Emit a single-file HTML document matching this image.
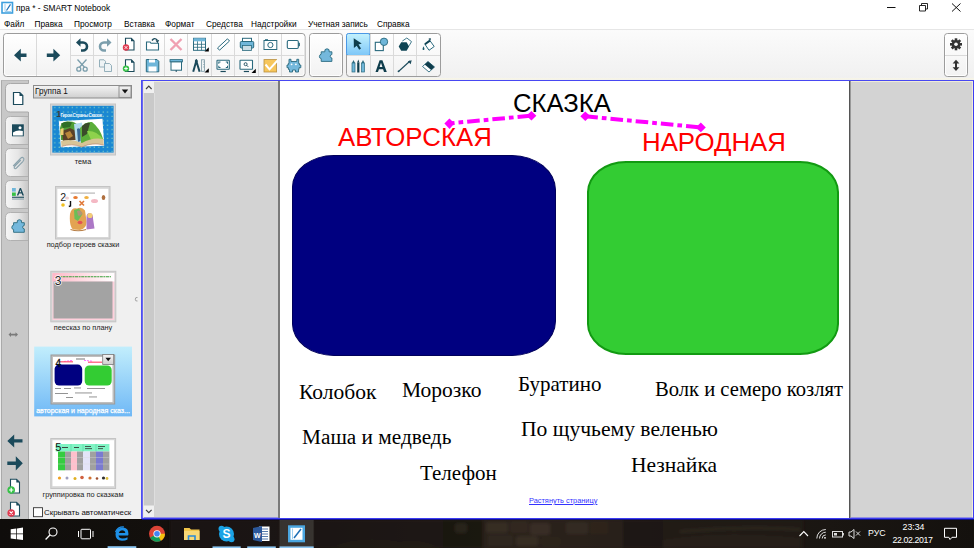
<!DOCTYPE html>
<html><head><meta charset="utf-8">
<style>
*{margin:0;padding:0;box-sizing:border-box}
html,body{width:974px;height:548px;overflow:hidden;background:#fff;font-family:"Liberation Sans",sans-serif}
.a{position:absolute}
#title{left:0;top:0;width:974px;height:16px;background:#fff}
#menu{left:0;top:16px;width:974px;height:14px;background:#fff;font-size:8.3px;color:#000}
#menu span{position:absolute;top:2.5px;line-height:10px}
#tb{left:0;top:29px;width:974px;height:51px;background:linear-gradient(#fbfbfb,#f0f0f0);border-top:1.5px solid #e6e6e6}
.grp{position:absolute;border:1px solid #acacac;border-radius:3px;background:linear-gradient(#fefefe,#f4f4f4)}
.vd{position:absolute;width:1px;background:#dcdcdc}
.hd{position:absolute;height:1px;background:#dcdcdc}
.ic{position:absolute}
#tabs{left:0;top:80px;width:28px;height:439px;background:#c9c9c9;border-left:1px solid #b0b0b0}
.tab{position:absolute;left:5px;width:23px;height:28px;border-radius:5px 0 0 5px;background:linear-gradient(90deg,#f2f2f2,#e0e0e0 60%,#c8c8c8);border:1px solid #b9b9b9;border-right:none}
#sorter{left:28px;top:80px;width:114px;height:439px;background:#f0f0f0}
.thumb{position:absolute;border:2px solid #c9c9c9;box-shadow:0 0 1px #bbb}
.lbl{position:absolute;font-size:8px;color:#222;text-align:center;white-space:nowrap}
#frame{left:142px;top:80px;width:832px;height:439px;border:1px solid #3a3af0}
#ws{left:143px;top:81px;width:830px;height:437px;background:#d3d3d3}
#page{left:278px;top:81px;width:573px;height:437px;background:#fff;border-left:2px solid #7a7a7a;border-right:1px solid #999;box-shadow:inset -1px 0 0 #555}
#taskbar{left:0;top:519px;width:974px;height:29px;background:linear-gradient(90deg,#0f0d0b 0%,#16120e 30%,#231c14 45%,#2a2118 55%,#1e1812 70%,#1a1612 85%,#14110e 100%)}
.serif{font-family:"Liberation Serif",serif;color:#000;white-space:nowrap;position:absolute;font-size:20px;line-height:1}
</style></head><body>
<div id="title" class="a"></div>
<svg class="a" style="left:0;top:0" width="974" height="16">
<rect x="2" y="2.5" width="10.5" height="10.5" fill="#fff" stroke="#3fa0de" stroke-width="1.6"/>
<path d="M5 4 V11.5 H11" fill="none" stroke="#9fd0f0" stroke-width="1"/>
<path d="M6.5 10.5 L10.5 4.3" stroke="#1d6fb5" stroke-width="1.2"/>
<path d="M887 7.5 H895.5" stroke="#111" stroke-width="1"/>
<path d="M919.5 5.5 H925.5 V11 H919.5 Z M921.5 5.5 V3.5 H927.5 V9 H925.5" fill="none" stroke="#111" stroke-width="0.9"/>
<path d="M952 3.5 L960.5 11.5 M960.5 3.5 L952 11.5" stroke="#111" stroke-width="1"/>
</svg>
<div class="a" style="left:16px;top:3px;font-size:8.4px;line-height:11px;color:#000;white-space:nowrap">пра * - SMART Notebook</div>
<div id="menu" class="a">
<span style="left:4px">Файл</span><span style="left:34.5px">Правка</span><span style="left:74px">Просмотр</span><span style="left:124px">Вставка</span><span style="left:165px">Формат</span><span style="left:206px">Средства</span><span style="left:251px">Надстройки</span><span style="left:308px">Учетная запись</span><span style="left:377px">Справка</span>
</div>
<div id="tb" class="a"></div>
<svg class="a" style="left:0;top:0" width="974" height="80" viewBox="0 0 974 80">
<defs>
<linearGradient id="gb" x1="0" y1="0" x2="0" y2="1"><stop offset="0" stop-color="#ffffff"/><stop offset="1" stop-color="#f2f2f2"/></linearGradient>
<linearGradient id="sel" x1="0" y1="0" x2="0" y2="1"><stop offset="0" stop-color="#c4f2fd"/><stop offset="1" stop-color="#7cc6f8"/></linearGradient>
</defs>
<!-- groups -->
<g fill="url(#gb)" stroke="#9c9c9c" stroke-width="1">
<rect x="3.5" y="33.5" width="301.5" height="43" rx="3"/>
<rect x="309.5" y="33.5" width="33" height="43" rx="3"/>
<rect x="346.5" y="33.5" width="94" height="43" rx="3"/>
<rect x="944.5" y="33.5" width="23" height="43" rx="3"/>
</g>
<g fill="none" stroke="#ffffff" stroke-width="1" opacity="0.9">
<rect x="4.5" y="34.5" width="299.5" height="41" rx="2.5"/>
<rect x="310.5" y="34.5" width="31" height="41" rx="2.5"/>
<rect x="945.5" y="34.5" width="21" height="41" rx="2.5"/>
</g>
<rect x="346.5" y="33.5" width="23.5" height="22" rx="2" fill="url(#sel)" stroke="#4a98e6"/>
<path d="M142 78.8 H974" stroke="#f8f6e4" stroke-width="1.2"/>
<g stroke="#dadada" stroke-width="1">
<path d="M36.5 34V76M70.5 34V76M93.5 34V76M117.5 34V76M140.5 34V76M164.5 34V76M187.5 34V76M211.5 34V76M234.5 34V76M258.5 34V76M281.5 34V76"/>
<path d="M71 55.5H304.5"/>
<path d="M370.5 34V76M393.5 34V76M416.5 34V76M347 55.5H370M370 55.5H440"/>
<path d="M945 55.5H967"/>
</g>
<g fill="#1b4a5b" stroke="none">
<!-- left arrow -->
<path d="M14 55.2 L20.8 48.8 V53.5 H26.5 V56.9 H20.8 V61.6 Z"/>
<!-- right arrow -->
<path d="M60.2 55.2 L53.4 48.8 V53.5 H46.8 V56.9 H53.4 V61.6 Z"/>
</g>
<!-- undo -->
<g fill="none" stroke="#1b4a5b" stroke-width="2.6" stroke-linecap="butt">
<path d="M79 42.5 H83 A4 4 0 0 1 83 50.5 H81"/>
</g>
<path d="M76 42.5 L80.5 38.3 V46.7 Z" fill="#1b4a5b"/>
<!-- redo -->
<g fill="none" stroke="#7b9eac" stroke-width="2.6">
<path d="M108 42.5 H104 A4 4 0 0 0 104 50.5 H106"/>
</g>
<path d="M111.5 42.5 L107 38.3 V46.7 Z" fill="#7b9eac"/>
<!-- delete page -->
<path d="M125.5 38.2 H131.3 L134 40.9 V50 H125.5 Z" fill="#fff" stroke="#1b4a5b" stroke-width="1.1"/>
<path d="M131 38 L134.3 41.2 H131 Z" fill="#1b4a5b"/>
<circle cx="126" cy="47.5" r="3.2" fill="#e03a50"/>
<path d="M124.6 46.1 L127.4 48.9 M127.4 46.1 L124.6 48.9" stroke="#fff" stroke-width="0.9"/>
<!-- cut -->
<g fill="none" stroke="#7b9eac" stroke-width="1.3">
<path d="M77.5 59.5 L84.5 67.3 M86.5 59.5 L79.5 67.3"/>
<circle cx="78.8" cy="69.2" r="2"/><circle cx="85.2" cy="69.2" r="2"/>
</g>
<!-- copy -->
<g fill="#eef3f5" stroke="#8aa8b4" stroke-width="0.9">
<path d="M99.5 59.8 H104 L105.5 61.3 V67 H99.5 Z"/>
<path d="M104.5 63.5 H109.5 L111.5 65.5 V71.5 H104.5 Z"/>
</g>
<!-- add page -->
<path d="M125.5 59.8 H131.3 L134 62.5 V71.5 H125.5 Z" fill="#fff" stroke="#1b4a5b" stroke-width="1.1"/>
<path d="M131 59.6 L134.3 62.8 H131 Z" fill="#1b4a5b"/>
<circle cx="126" cy="68.6" r="3.2" fill="#35c046"/>
<path d="M124.2 68.6 H127.8 M126 66.8 V70.4" stroke="#fff" stroke-width="1"/>
<!-- open folder -->
<path d="M146.5 42 H150 L151 43.3 H158.5 V50 H146.5 Z" fill="#fff" stroke="#2a6a7e" stroke-width="1.1"/>
<path d="M152 40.5 Q154.5 37 157.3 40.2" fill="none" stroke="#1b4a5b" stroke-width="1.4"/>
<path d="M155.5 40.5 L159.2 40 L157.6 43.3 Z" fill="#1b4a5b"/>
<!-- pink X -->
<path d="M170.5 39 L181.5 50 M181.5 39 L170.5 50" stroke="#f0a0b2" stroke-width="2.4"/>
<!-- table -->
<rect x="193.5" y="38.3" width="12" height="12" fill="#fff" stroke="#2a6a7e" stroke-width="1"/>
<rect x="193.5" y="38.3" width="12" height="3" fill="#6fb6d9"/>
<path d="M193.5 44.3 H205.5 M193.5 47.3 H205.5 M197.5 41.3 V50.3 M201.5 41.3 V50.3" stroke="#2a6a7e" stroke-width="0.8"/>
<path d="M208.8 47.3 V51.6 H204.5 Z" fill="#000"/>
<!-- save -->
<path d="M146.3 59.5 H157 L158.8 61.3 V71.8 H146.3 Z" fill="#6fb6d9" stroke="#2a6a7e" stroke-width="1"/>
<rect x="149" y="59.5" width="6" height="3" fill="#fff"/>
<rect x="148.5" y="66.5" width="8" height="5" fill="#fff"/>
<!-- screen -->
<rect x="170" y="59.6" width="12.5" height="2.3" fill="#6fb6d9" stroke="#2a6a7e" stroke-width="0.8"/>
<rect x="171" y="61.9" width="10.5" height="8.3" fill="#fff" stroke="#2a6a7e" stroke-width="1"/>
<path d="M176.2 70.2 V72" stroke="#1b4a5b" stroke-width="1"/>
<!-- compass -->
<path d="M196.3 61 L193.2 71.8 M196.3 61 L199.6 71.8" stroke="#1b4a5b" stroke-width="2" fill="none"/>
<circle cx="196.3" cy="61" r="1.5" fill="#1b4a5b"/><path d="M196.3 59 V60" stroke="#1b4a5b" stroke-width="1"/>
<rect x="201.5" y="59.8" width="3" height="11.5" fill="#eef3f5" stroke="#7a98a4" stroke-width="0.8"/>
<path d="M203 62 H204.5 M203 64.5 H204.5 M203 67 H204.5" stroke="#7a98a4" stroke-width="0.6"/>
<path d="M208.8 68.3 V72.6 H204.5 Z" fill="#000"/>
<!-- ruler -->
<path d="M217.5 48 L227.5 38.8 L229.5 41 L219.5 50.2 Z" fill="#fff" stroke="#2a6a7e" stroke-width="1"/>
<!-- printer -->
<rect x="242.5" y="38.3" width="9" height="3.5" fill="#fff" stroke="#2a6a7e" stroke-width="1"/>
<rect x="240.3" y="41.5" width="13.4" height="6.5" rx="1" fill="#6fb6d9" stroke="#2a6a7e" stroke-width="1"/>
<rect x="242.5" y="45.5" width="9" height="5" fill="#c9dde5" stroke="#2a6a7e" stroke-width="0.8"/>
<!-- camera -->
<rect x="264" y="40.5" width="12.8" height="9" fill="#fff" stroke="#2a6a7e" stroke-width="1"/>
<rect x="265" y="39.2" width="3" height="1.5" fill="#2a6a7e"/>
<circle cx="270.4" cy="45" r="2.6" fill="none" stroke="#2a6a7e" stroke-width="1"/>
<!-- battery rect -->
<rect x="287.3" y="40.5" width="11" height="8" rx="1.2" fill="#fff" stroke="#2a6a7e" stroke-width="1.1"/>
<rect x="298.3" y="42.8" width="1.6" height="3.4" fill="#2a6a7e"/>
<!-- capture monitor -->
<rect x="217" y="60.3" width="12.3" height="9" rx="0.5" fill="#fff" stroke="#2a6a7e" stroke-width="1.1"/>
<path d="M218.3 61.6 h2.2 v1 h-1.2 v1.2 h-1z M228 61.6 h-2.2 v1 h1.2 v1.2 h1z M218.3 68 h2.2 v-1 h-1.2 v-1.2 h-1z M228 68 h-2.2 v-1 h1.2 v-1.2 h1z" fill="#2a6a7e"/>
<path d="M220.5 71.5 H225.8" stroke="#1b4a5b" stroke-width="1.2"/>
<!-- doc cam monitor -->
<rect x="240" y="60.3" width="12.5" height="9" rx="0.5" fill="#fff" stroke="#2a6a7e" stroke-width="1.1"/>
<circle cx="245.6" cy="64.2" r="1.5" fill="none" stroke="#1b4a5b" stroke-width="0.9"/>
<path d="M246.7 65.3 L248.2 66.8" stroke="#1b4a5b" stroke-width="1"/>
<path d="M243.8 71.5 H249" stroke="#1b4a5b" stroke-width="1.2"/>
<path d="M255.8 68.8 V73.1 H251.5 Z" fill="#000"/>
<!-- yellow check -->
<rect x="264" y="59.6" width="12.6" height="12.4" fill="#f7c65a" stroke="#b89040" stroke-width="0.8"/>
<path d="M265.5 64.5 L269.5 69.3 L277.5 60.5" fill="none" stroke="#fff" stroke-width="2"/>
<!-- creature -->
<path d="M289 59.3 H291 V61.5 H296.8 V59.3 H298.7 V63.5 H299.5 V65 H300.8 V67.7 H299 V69.5 H298.5 V72 H295.5 V70 H292.5 V72 H289.5 V69.5 H288.5 V67.7 H287 V65 H288.3 V63.5 H289 Z" fill="#74b8dc" stroke="#2a6a7e" stroke-width="0.9" stroke-linejoin="round"/>
<circle cx="291.6" cy="64.3" r="0.9" fill="#fff"/><circle cx="295.9" cy="64.3" r="0.9" fill="#fff"/>
<!-- puzzle -->
<path d="M321.2 61.4 V58.6 Q319.2 58.3 319.4 56.4 Q319.7 54.3 321.2 54.2 V51.8 H324.8 Q324.2 48.8 327 48.8 Q329.8 48.8 329.2 51.8 H331.9 V54.5 Q330.2 54.8 330.2 56.3 Q330.2 57.8 331.9 58 V61.4 Z" fill="#74b8dc" stroke="#2a6a7e" stroke-width="0.9" stroke-linejoin="round"/>
<!-- select arrow -->
<path d="M353.7 38.3 L361.7 43.5 L358.5 44.5 L361 48.5 L359.2 49.7 L356.7 45.7 L353.9 47.9 Z" fill="#0f3d4c"/>
<!-- shapes -->
<rect x="375.3" y="42.3" width="8" height="8.3" fill="#fff" stroke="#2a6a7e" stroke-width="1.1"/>
<circle cx="384" cy="41.8" r="3.7" fill="#6fb6d9" stroke="#2a6a7e" stroke-width="0.9"/>
<!-- polygon (eraser hexagon) -->
<path d="M402.3 41.1 L406.8 38 L411.5 41.6 L409.1 45.8" fill="#fff" stroke="#2a6a7e" stroke-width="0.9"/>
<path d="M398.7 46.5 L401.2 42.2 H406.6 L409.1 46.5 L406.6 50.8 H401.2 Z" fill="#0f4454"/>
<!-- fill bucket -->
<path d="M424.9 44.2 L429.9 40.6 L434.2 46.5 L429 50.3 Z" fill="#fff" stroke="#2a6a7e" stroke-width="1"/>
<path d="M424.9 44.2 L429.9 40.6" stroke="#0f4454" stroke-width="2"/>
<path d="M429.9 40.8 V38.3 M428.7 39 H431" stroke="#1b4a5b" stroke-width="1.1"/>
<path d="M423.5 46.3 Q422.2 48.6 422.6 49.4 Q423.5 50.6 424.4 49.4 Q424.8 48.6 423.5 46.3Z" fill="#1b5a6b"/>
<!-- pens -->
<rect x="352" y="63" width="3" height="9" fill="#6fb6d9" stroke="#2a6a7e" stroke-width="0.7"/>
<path d="M352 63 L353.5 60 L355 63Z" fill="#2a6a7e"/>
<rect x="357.2" y="62.5" width="2.2" height="10" fill="#0f3d4c"/>
<path d="M357.2 62.5 L358.3 59.6 L359.4 62.5Z" fill="#0f3d4c"/>
<rect x="361.5" y="63" width="3" height="9" fill="#6fb6d9" stroke="#2a6a7e" stroke-width="0.7"/>
<path d="M361.5 63 L363 60 L364.5 63Z" fill="#2a6a7e"/>
<!-- text A -->
<path d="M375.5 72 L379.6 60.3 H382.4 L386.8 72 H384 L383.1 69.2 H378.9 L378 72 Z M379.6 67 H382.4 L381 62.8 Z" fill="#0f3d4c"/>
<!-- line -->
<path d="M398.5 71.5 L410 61" stroke="#1b4a5b" stroke-width="1.1"/>
<circle cx="398.5" cy="71.3" r="0.9" fill="#1b4a5b"/>
<path d="M411.7 60.3 L407.8 61.3 L410.7 64.2 Z" fill="#1b4a5b"/>
<!-- eraser -->
<path d="M428 61.5 L434.5 67 L429 72 L422.5 66.5 Z" fill="#fff" stroke="#2a6a7e" stroke-width="0.9"/>
<path d="M428 61.5 L434.5 67 L431.2 70 L424.7 64.5 Z" fill="#0f3d4c"/>
<!-- gear -->
<g transform="translate(956,44.3)" fill="#333">
<circle r="4.3"/>
<path d="M-1.3 -6 H1.3 V6 H-1.3Z" /><path d="M-1.3 -6 H1.3 V6 H-1.3Z" transform="rotate(45)"/><path d="M-1.3 -6 H1.3 V6 H-1.3Z" transform="rotate(90)"/><path d="M-1.3 -6 H1.3 V6 H-1.3Z" transform="rotate(135)"/>
<circle r="1.8" fill="#f8f8f8"/>
</g>
<!-- up-down arrows -->
<path d="M956 59.8 L959.4 63.5 H957 V67.2 H959.4 L956 70.9 L952.6 67.2 H955 V63.5 H952.6 Z" fill="#333"/>
</svg>
<svg class="a" style="left:0;top:80px" width="142" height="439" viewBox="0 80 142 439">
<defs>
<linearGradient id="tabg" x1="0" y1="0" x2="1" y2="0"><stop offset="0" stop-color="#f6f6f6"/><stop offset="0.55" stop-color="#e6e6e6"/><stop offset="1" stop-color="#c6c6c6"/></linearGradient>
<linearGradient id="combo" x1="0" y1="0" x2="0" y2="1"><stop offset="0" stop-color="#f4f4f4"/><stop offset="1" stop-color="#cfcfcf"/></linearGradient>
<linearGradient id="selb" x1="0" y1="0" x2="0" y2="1"><stop offset="0" stop-color="#c2eefc"/><stop offset="1" stop-color="#6fb8f6"/></linearGradient>
<pattern id="dots" x="0" y="0" width="4.4" height="4.4" patternUnits="userSpaceOnUse"><circle cx="2" cy="2" r="0.7" fill="#8cd4c0"/></pattern>
</defs>
<rect x="0" y="80" width="28.5" height="439" fill="#c8c8c8"/>
<rect x="0" y="80" width="1" height="439" fill="#ececec"/><rect x="1" y="80" width="1" height="439" fill="#aaaaaa"/>
<rect x="28.5" y="80" width="113.5" height="439" fill="#f0f0f0"/>
<path d="M1.5 80.5 H28.5" stroke="#b8b8b8"/>
<!-- active tab -->
<path d="M28.5 83.5 H10.5 Q5.5 83.5 5.5 88.5 V107 Q5.5 112 10.5 112 H28.5" fill="#f0f0f0" stroke="#a9a9a9" stroke-width="1"/>
<rect x="28" y="84" width="1.5" height="27.5" fill="#f0f0f0"/>
<!-- inactive tabs -->
<g fill="url(#tabg)" stroke="#b0b0b0" stroke-width="1">
<path d="M28.5 116.5 H10.5 Q5.5 116.5 5.5 121.5 V139.5 Q5.5 144.5 10.5 144.5 H28.5"/>
<path d="M28.5 148.5 H10.5 Q5.5 148.5 5.5 153.5 V171.5 Q5.5 176.5 10.5 176.5 H28.5"/>
<path d="M28.5 180.5 H10.5 Q5.5 180.5 5.5 185.5 V203.5 Q5.5 208.5 10.5 208.5 H28.5"/>
<path d="M28.5 212.5 H10.5 Q5.5 212.5 5.5 217.5 V235.5 Q5.5 240.5 10.5 240.5 H28.5"/>
</g>
<path d="M28.5 80 V83.5 M28.5 112 V519" stroke="#a9a9a9" stroke-width="1"/>
<!-- page icon -->
<path d="M13.5 92.5 H19.8 L22.8 95.5 V104.5 H13.5 Z" fill="#fff" stroke="#1b4a5b" stroke-width="1.2"/>
<path d="M19.5 92.2 L23.2 95.9 H19.5Z" fill="#1b4a5b"/>
<!-- gallery icon -->
<rect x="12" y="124.3" width="11.8" height="12" fill="#1b4a5b"/>
<path d="M13 132.5 Q17 129.5 22.8 131 V135.5 H13 Z" fill="#fff"/>
<circle cx="20" cy="127.8" r="1.5" fill="#fff"/>
<!-- paperclip -->
<path d="M13.2 166 L20.5 158.3 Q22.6 156.4 23.8 158.5 Q24.3 160 22.8 161.6 L16.5 168 Q15 169.3 14.3 168.3 Q13.8 167.2 15 166 L20.8 160" fill="none" stroke="#8aa2ac" stroke-width="1.1"/>
<!-- properties -->
<rect x="12" y="188" width="3.8" height="3.6" fill="#6fb6d9"/>
<rect x="12" y="192.5" width="3.8" height="3.4" fill="#35c046"/>
<path d="M16.8 195.5 L19.8 188 H21 L24 195.5 H22.4 L21.7 193.6 H19.1 L18.4 195.5 Z M19.6 192.3 H21.2 L20.4 190 Z" fill="#1b4a5b"/>
<rect x="12" y="196.7" width="12" height="1.1" fill="#1b4a5b"/><rect x="12" y="198.5" width="12" height="1.1" fill="#8aa2ac"/>
<!-- puzzle tab -->
<path transform="translate(-307.6,170.9)" d="M321.2 61.4 V58.6 Q319.2 58.3 319.4 56.4 Q319.7 54.3 321.2 54.2 V51.8 H324.8 Q324.2 48.8 327 48.8 Q329.8 48.8 329.2 51.8 H331.9 V54.5 Q330.2 54.8 330.2 56.3 Q330.2 57.8 331.9 58 V61.4 Z" fill="#74b8dc" stroke="#2a6a7e" stroke-width="0.9" stroke-linejoin="round"/>
<!-- resize arrows -->
<path d="M8.5 334.6 L11 332.3 V333.8 H15.5 V332.3 L18 334.6 L15.5 336.9 V335.4 H11 V336.9 Z" fill="#7a7a7a"/>
<!-- prev/next arrows -->
<path d="M7.3 441 L14.2 434.5 V439.2 H22.5 V442.6 H14.2 V447.5 Z" fill="#1b4a5b"/>
<path d="M22.8 463.3 L15.8 456.3 V461.6 H7.3 V465 H15.8 V470.4 Z" fill="#1b4a5b"/>
<!-- add page -->
<path d="M10.5 479.3 H16.5 L19.5 482.3 V493 H10.5 Z" fill="#fff" stroke="#1b4a5b" stroke-width="1.1"/>
<path d="M16.3 479 L19.8 482.5 H16.3Z" fill="#1b4a5b"/>
<circle cx="11.2" cy="490" r="3.8" fill="#35c046"/>
<path d="M9 490 H13.4 M11.2 487.8 V492.2" stroke="#fff" stroke-width="1.2"/>
<!-- delete page -->
<path d="M10.5 502.3 H16.5 L19.5 505.3 V516 H10.5 Z" fill="#fff" stroke="#1b4a5b" stroke-width="1.1"/>
<path d="M16.3 502 L19.8 505.5 H16.3Z" fill="#1b4a5b"/>
<circle cx="11.2" cy="513" r="3.8" fill="#e03a50"/>
<path d="M9.6 511.4 L12.8 514.6 M12.8 511.4 L9.6 514.6" stroke="#fff" stroke-width="1.1"/>

<!-- combo -->
<rect x="33.5" y="85.5" width="98" height="12.5" fill="url(#combo)" stroke="#8c8c8c" stroke-width="1"/>
<rect x="119" y="86" width="12" height="11.5" fill="url(#combo)" stroke="#8a8a8a" stroke-width="0.9"/>
<path d="M121.8 89.5 H128.2 L125 93.5 Z" fill="#111"/>

<!-- thumb 1 -->
<rect x="50.5" y="104" width="65" height="51" fill="#d6d6d6" stroke="#c4c4c4"/>
<rect x="52.3" y="105.8" width="61.3" height="46.8" fill="#1a88d2"/>
<rect x="52.3" y="105.8" width="61.3" height="46.8" fill="url(#dots)"/>
<text x="56.3" y="117.4" font-size="9.5" font-weight="bold" fill="#3a3a3a">1</text>
<text x="60.5" y="117.2" font-size="4.6" font-weight="bold" fill="#e8f6fc" textLength="41.5">Герои Страны Сказок</text>
<path d="M58.8 121.2 L102.5 118.8 L104.2 145.7 L60.8 147.3 Z" fill="#fff"/>
<path d="M60 128 Q61 121 68 121.5 Q76 121 78 126 L79 136 L70 141 L61 140 Z" fill="#4f9e34"/>
<path d="M61 123.5 Q66 120.5 72 122.5 L70 127 L63 128Z" fill="#2f6e26"/>
<path d="M62 131 L70 128 L76 131 L76 140 L63 141 Z" fill="#5a4028"/>
<path d="M65 133 L70 131 L73 136 L68 139Z" fill="#b8863a"/>
<path d="M60.5 129 L63.5 128 L63.5 135 L60.5 135Z" fill="#f0d070"/>
<path d="M74 124 L82 122.5 L84 144 L76 145 Z" fill="#b4dcee"/>
<path d="M77 129 Q79 127 81 130 L80.5 141 L78 142Z" fill="#3a6a9a"/>
<path d="M80 128 Q86 121 92 122 Q100 128 103.5 140 L90 143 L81 143 Z" fill="#5cae3a"/>
<path d="M82 126 Q86 122 90 123 L87 134 L82 137Z" fill="#3a4a2a"/>
<path d="M87 131 Q96 130 103 139 L92 142Z" fill="#8ed24c"/>
<path d="M61 141 Q71 138 82 143 Q92 137 103.5 139 L103.8 145 Q92 142 82 147 Q72 143 61.5 146.5 Z" fill="#d8c496"/>
<path d="M61.5 146.5 Q72 143 82 147 Q92 142 103.8 145" stroke="#b07a6a" stroke-width="0.6" fill="none"/>
<!-- thumb 2 -->
<rect x="55.5" y="186.5" width="54.5" height="52.5" fill="#d6d6d6" stroke="#c4c4c4"/>
<rect x="57.3" y="188.8" width="51" height="48.2" fill="#fff"/>
<text x="60.3" y="200.6" font-size="10.5" fill="#222">2</text>
<rect x="70.5" y="192.5" width="24.5" height="1.2" fill="#9a9a9a" opacity="0.7"/>
<ellipse cx="67" cy="198" rx="2" ry="1.5" fill="#f0d0d0"/>
<ellipse cx="75.5" cy="197.5" rx="2.3" ry="1.5" fill="#e87a30"/>
<ellipse cx="86.5" cy="197.5" rx="2.3" ry="1.6" fill="#f0b040"/>
<path d="M79.5 201 L84 205.5 M84 201 L79.5 205.5" stroke="#e07838" stroke-width="1.6"/>
<ellipse cx="94.5" cy="201" rx="3.5" ry="2" fill="#f4b8c4"/>
<ellipse cx="103.5" cy="197.5" rx="1.8" ry="2.5" fill="#b07040"/>
<ellipse cx="63" cy="205" rx="1.8" ry="1.8" fill="#f0c020"/>
<path d="M70.5 201 V206 L68.8 206.5" stroke="#111" stroke-width="1.4" fill="none"/>
<g opacity="0.9">
<path d="M70 214 Q71.5 207 77 208.5 Q82 206.5 85 210.5 L86.5 221 Q87 228.5 80 230 L73 229.5 Q69 226 70 214 Z" fill="#e09a40"/>
<path d="M74 210 L79 208.5 L82.5 214 L78 221 L74.5 219 Z" fill="#5db845"/>
<path d="M77 211 Q80 209.5 82.5 213 Q81.5 216.5 78 215.5 Z" fill="#a88a6a"/>
<ellipse cx="80" cy="222.5" rx="2.5" ry="1.7" fill="#e04040"/>
<path d="M86.5 217 Q86.5 213 90 213 Q93.5 214 93 218.5 L94.5 228.5 L86.5 229.5 Z" fill="#a46ac0"/>
<circle cx="90" cy="215.5" r="2.6" fill="#f2c868"/>
<path d="M70.5 229.5 Q78 232 86 229.5" stroke="#b07030" stroke-width="1.2" fill="none"/>
</g>
<!-- thumb 3 -->
<rect x="50.8" y="271.3" width="65" height="50.5" fill="#d6d6d6" stroke="#c4c4c4"/>
<rect x="52.5" y="273" width="61.8" height="47" fill="#ffd0dc"/>
<rect x="52.5" y="273" width="61.8" height="8.5" fill="url(#pinkg)"/>
<defs><linearGradient id="pinkg" x1="0" y1="0" x2="1" y2="0"><stop offset="0" stop-color="#ffb8c8"/><stop offset="1" stop-color="#ffffff"/></linearGradient>
<linearGradient id="pinkv" x1="0" y1="0" x2="0" y2="1"><stop offset="0" stop-color="#ffc0d0"/><stop offset="1" stop-color="#f0c8d4"/></linearGradient></defs>
<rect x="53.5" y="281.5" width="59" height="37" fill="#a3a3a3"/>
<path d="M60 276.8 H111" stroke="#3aa03a" stroke-width="1.1" stroke-dasharray="2 0.6 3 0.6"/>
<text x="54.8" y="284.6" font-size="12" fill="#222" stroke="#fff" stroke-width="1.4" paint-order="stroke">3</text>
<path d="M137.5 297.5 A1.8 1.8 0 1 0 137.5 301" fill="none" stroke="#999" stroke-width="0.9"/>

<!-- selected 4 -->
<rect x="34.2" y="346.6" width="97.8" height="69.8" fill="url(#selb)"/>
<rect x="51" y="355" width="63.7" height="49" fill="#bfbfbf" stroke="#9a9a9a"/>
<rect x="53" y="357" width="59.5" height="45" fill="#fff"/>
<rect x="54.6" y="364.6" width="27.6" height="21" rx="4.5" fill="#000080"/>
<rect x="84.7" y="365.5" width="27" height="20" rx="4.5" fill="#33cc33"/>
<path d="M64 361.5 L73 360.3 M84 360.3 L93 361.3" stroke="#ff40ff" stroke-width="0.8" stroke-dasharray="2 1"/>
<rect x="59" y="361" width="14" height="1.5" fill="#ff5070" opacity="0.8"/>
<rect x="88" y="361.5" width="14" height="1.5" fill="#ff5070" opacity="0.8"/>
<rect x="76" y="358.5" width="9" height="1" fill="#777"/>
<text x="55.6" y="367.4" font-size="10" fill="#111" stroke="#111" stroke-width="0.3">4</text>
<g fill="#888">
<rect x="55" y="388" width="6" height="0.9"/><rect x="64" y="388" width="7" height="0.9"/><rect x="74" y="387.5" width="7" height="0.9"/><rect x="87" y="388" width="18" height="0.9"/>
<rect x="55" y="393" width="13" height="0.9"/><rect x="75" y="392.5" width="17" height="0.9"/>
<rect x="66" y="397" width="7" height="0.9"/><rect x="89" y="396.5" width="8" height="0.9"/>
</g>
<rect x="102.7" y="354.5" width="11" height="10" fill="url(#combo)" stroke="#7a7a7a" stroke-width="0.8"/>
<path d="M105.5 357.8 H111 L108.2 361.2 Z" fill="#111"/>

<!-- thumb 5 -->
<rect x="50.8" y="438.5" width="64.8" height="50" fill="#d6d6d6" stroke="#c4c4c4"/>
<rect x="52.5" y="440.2" width="61.5" height="46" fill="#fff"/>
<rect x="55.7" y="444" width="53.7" height="7.5" fill="#80f4c4"/>
<rect x="58" y="451.5" width="7" height="18.8" fill="#35cc40"/>
<rect x="65" y="451.5" width="6" height="18.8" fill="#a0a0a0"/>
<rect x="71" y="451.5" width="6" height="18.8" fill="#ffc0cc"/>
<rect x="77" y="451.5" width="6" height="18.8" fill="#a0a0a0"/>
<rect x="83" y="451.5" width="7" height="18.8" fill="#e4e4f8"/>
<rect x="90" y="451.5" width="6" height="18.8" fill="#a0a0a0"/>
<rect x="96" y="451.5" width="7" height="18.8" fill="#7a7ad0"/>
<rect x="103" y="451.5" width="6.4" height="18.8" fill="#a0a0a0"/>
<path d="M58 457.5 H109.4 M58 464 H109.4" stroke="#d8d8d8" stroke-width="0.4"/>
<path d="M71 451.5 V444 M83 451.5 V444 M96 451.5 V444" stroke="#40c090" stroke-width="0.4"/>
<g fill="#333"><rect x="62" y="447" width="6" height="0.9"/><rect x="74" y="447" width="5" height="0.9"/><rect x="85" y="446" width="6" height="0.8"/><rect x="85" y="448.3" width="7" height="0.8"/><rect x="98" y="446" width="7" height="0.8"/><rect x="98" y="448.3" width="5" height="0.8"/></g>
<text x="55.2" y="451.3" font-size="11" fill="#111">5</text>
<g>
<circle cx="59.5" cy="478" r="1.6" fill="#f0a020"/><circle cx="67" cy="478" r="1.5" fill="#a0a0c0"/><circle cx="75" cy="478.5" r="1.5" fill="#e0b020"/><circle cx="82" cy="477.5" r="1.8" fill="#d06040"/><circle cx="90" cy="478" r="1.6" fill="#d07030"/><circle cx="97" cy="478.5" r="1.3" fill="#a05030"/><circle cx="103.5" cy="478" r="1.6" fill="#303030"/><circle cx="107" cy="478.5" r="1.4" fill="#e0c040"/>
</g>
<!-- checkbox -->
<rect x="33.5" y="507.7" width="9" height="9" fill="#fff" stroke="#333" stroke-width="0.9"/>
</svg>
<div class="lbl" style="left:28px;width:110px;top:156.5px;font-size:7.3px;line-height:9px">тема</div>
<div class="lbl" style="left:28px;width:110px;top:240px;font-size:7.3px;line-height:9px">подбор героев сказки</div>
<div class="lbl" style="left:28px;width:110px;top:323px;font-size:7.3px;line-height:9px">пеесказ по плану</div>
<div class="lbl" style="left:28px;width:110px;top:405.5px;font-size:7.05px;line-height:9px;color:#fff;-webkit-text-stroke:0.25px #fff">авторская и народная сказ...</div>
<div class="lbl" style="left:28px;width:110px;top:490px;font-size:7.35px;line-height:9px">группировка по сказкам</div>
<div class="a" style="left:44px;top:507.5px;font-size:7.9px;line-height:10px;color:#111;white-space:nowrap">Скрывать автоматическ</div>
<div class="a" style="left:35px;top:86px;font-size:8.2px;line-height:11px;color:#111;white-space:nowrap">Группа 1</div>
<div id="ws" class="a"></div>
<svg class="a" style="left:140px;top:80px" width="834" height="440" viewBox="140 80 834 440">
<rect x="142" y="80" width="832" height="439" fill="none"/>
<rect x="143.5" y="81" width="10.5" height="437" fill="#c9c9c9"/>
<rect x="143.5" y="81" width="10.5" height="12" fill="#f0f0f0"/>
<rect x="143.5" y="505.5" width="10.5" height="12" fill="#f0f0f0"/>
<path d="M146 89 L148.8 86.2 L151.6 89" fill="none" stroke="#404040" stroke-width="1.2"/>
<path d="M146 509.8 L148.8 512.6 L151.6 509.8" fill="none" stroke="#404040" stroke-width="1.2"/>
<path d="M154 81.5 H278 M850 81.5 H973" stroke="#f0ecd8" stroke-width="1"/>
<path d="M154 517.5 H278 M850 517.5 H973" stroke="#eae6d0" stroke-width="1"/>
<path d="M142 80 V519 M142 518.5 H974 M973.5 80 V519" stroke="#3c3cf2" stroke-width="1.8" fill="none"/>
<path d="M143.3 81 V518" stroke="#f4f0dc" stroke-width="0.8"/>
<path d="M142 80.5 H974" stroke="#4848f2" stroke-width="1.1" fill="none"/>
<path d="M142 519.5 H974" stroke="#10108a" stroke-width="1"/>
<path d="M154.5 93 V505.5" stroke="#dedede" stroke-width="1"/>
<path d="M972.5 81 V517.5" stroke="#f0ecd8" stroke-width="1"/>
</svg>
<div id="page" class="a"></div>
<div class="a" style="left:292px;top:155px;width:264px;height:201px;background:#000080;border:1px solid #00005a;border-radius:42px 44px 44px 42px / 32px 35px 35px 32px"></div>
<div class="a" style="left:587px;top:161px;width:252px;height:194px;background:#33cc33;border:2px solid #129a12;border-radius:39px / 31px"></div>
<div class="a" style="left:338px;top:125px;font-size:25.8px;line-height:1;color:#f00;white-space:nowrap">АВТОРСКАЯ</div>
<div class="a" style="left:642px;top:130px;font-size:25.8px;line-height:1;color:#f00;white-space:nowrap">НАРОДНАЯ</div>
<div class="a" style="left:513px;top:91px;font-size:25.7px;line-height:1;color:#000;white-space:nowrap">СКАЗКА</div>
<svg class="a" style="left:279px;top:81px" width="571" height="437">
<g stroke="#ff00ff" stroke-width="4" fill="none" stroke-dasharray="12.6 4 4.7 4">
<line x1="252.4" y1="34.7" x2="170.2" y2="42.4" stroke-dashoffset="-1.3"/>
<line x1="306.3" y1="35.3" x2="421.8" y2="46.4"/>
</g>
<g fill="#ff00ff">
<path d="M165.4 42.6 L170.4 37.5 L175.4 42.3 L170.6 47.9z"/>
<path d="M247.4 34.7 L252.4 29.9 L257.4 34.7 L252.4 39.5z"/>
<path d="M301.3 35.3 L306.3 30.5 L311.3 35.3 L306.3 40.1z"/>
<path d="M416.8 46.4 L421.8 41.6 L426.8 46.4 L421.8 51.2z"/>
</g>
</svg>
<div class="serif" style="left:299px;top:382px;font-size:21.5px">Колобок</div>
<div class="serif" style="left:402px;top:380px;font-size:21.5px">Морозко</div>
<div class="serif" style="left:518px;top:374px;font-size:21px">Буратино</div>
<div class="serif" style="left:655px;top:378.5px;font-size:20.6px">Волк и семеро козлят</div>
<div class="serif" style="left:302px;top:427px;font-size:21.3px">Маша и медведь</div>
<div class="serif" style="left:521px;top:419px;font-size:21.6px">По щучьему веленью</div>
<div class="serif" style="left:420px;top:463px;font-size:21px">Телефон</div>
<div class="serif" style="left:631px;top:455px;font-size:21.5px">Незнайка</div>
<div class="a" style="left:529px;top:497px;font-size:7.4px;line-height:1;color:#3333ff;text-decoration:underline;white-space:nowrap">Растянуть страницу</div>
<div id="taskbar" class="a"></div>
<svg class="a" style="left:0;top:519px" width="974" height="29" viewBox="0 519 974 29">
<defs>
<radialGradient id="wp1" cx="0.5" cy="0.5" r="0.5"><stop offset="0" stop-color="#3a2e22" stop-opacity="0.8"/><stop offset="1" stop-color="#3a2e22" stop-opacity="0"/></radialGradient>
</defs>
<filter id="blr" x="-5%" y="-50%" width="110%" height="200%"><feGaussianBlur stdDeviation="1.6"/></filter>
<g opacity="0.75" filter="url(#blr)">
<rect x="170" y="520" width="110" height="28" fill="#1d1812"/>
<rect x="313" y="520" width="130" height="28" fill="#1f1912"/>
<path d="M330 548 Q360 535 400 542 Q420 538 440 548Z" fill="#221c15"/>
<rect x="443" y="520" width="40" height="28" fill="#15120e"/>
<rect x="455" y="523" width="12" height="10" rx="3" fill="#2a251e"/>
<rect x="483" y="520" width="140" height="28" fill="#2a231b"/>
<rect x="486" y="522" width="22" height="11" rx="3" fill="#3a3127"/>
<rect x="510" y="521" width="18" height="12" rx="3" fill="#342c23"/>
<rect x="530" y="523" width="20" height="12" rx="3" fill="#3d3329"/>
<rect x="488" y="535" width="25" height="11" rx="3" fill="#322a21"/>
<rect x="516" y="536" width="22" height="10" rx="3" fill="#3a3128"/>
<rect x="541" y="537" width="20" height="9" rx="3" fill="#2e261e"/>
<rect x="566" y="522" width="22" height="12" rx="3" fill="#382f25"/>
<rect x="590" y="521" width="18" height="13" rx="3" fill="#30281f"/>
<rect x="563" y="536" width="28" height="10" rx="3" fill="#2c241c"/>
<rect x="610" y="522" width="12" height="12" rx="3" fill="#2a231b"/>
<rect x="623" y="520" width="40" height="28" fill="#1a1612"/>
<rect x="663" y="520" width="140" height="28" fill="#221d18"/>
<path d="M663 540 Q720 530 800 538 V548 H663Z" fill="#2a241d"/>
<path d="M680 530 Q740 524 800 528 V531 Q740 527 680 533Z" fill="#312a22"/>
</g>
<rect x="279.5" y="520" width="34.2" height="28" fill="#3d3a36" opacity="0.85"/>
<path d="M142 519.5 H974" stroke="#10108a" stroke-width="1"/>
<!-- windows logo -->
<g fill="#fff">
<path d="M10.7 529.3 L16.3 528.5 V533.5 H10.7Z"/><path d="M17 528.4 L23 527.6 V533.5 H17Z"/>
<path d="M10.7 534.2 H16.3 V539.2 L10.7 538.4Z"/><path d="M17 534.2 H23 V540 L17 539.3Z"/>
</g>
<!-- search -->
<circle cx="53" cy="532" r="4" fill="none" stroke="#fff" stroke-width="1.1"/>
<path d="M50.2 534.8 L45.6 539.5" stroke="#fff" stroke-width="1.3"/>
<!-- task view -->
<rect x="81" y="529.3" width="9.5" height="9.5" rx="0.8" fill="none" stroke="#fff" stroke-width="1"/>
<path d="M78.5 531 V537 M93 531 V537" stroke="#fff" stroke-width="1"/>
<!-- edge -->
<path d="M128 535.5 H118.5 Q119 538.5 122.5 538.5 Q125.5 538.5 127.5 537.3 V539.6 Q125.5 540.8 122 540.8 Q115.5 540.5 115.5 534.5 Q115.8 528 122.5 527.5 Q128.8 527.8 128.5 534.3 Z M118.8 533 H125.3 Q125 530.3 122 530.2 Q119.5 530.4 118.8 533Z" fill="#1e90e8"/>
<path d="M115.5 532 Q118 526.5 124 527" fill="none" stroke="#1e90e8" stroke-width="1.2"/>
<rect x="107.6" y="546.2" width="28.7" height="1.8" fill="#8cc6f2"/>
<!-- chrome -->
<circle cx="157" cy="533.8" r="8" fill="#db4437"/>
<path d="M157 533.8 L150.07 537.8 A8 8 0 0 0 161 540.73 Z" fill="#0f9d58"/>
<path d="M157 533.8 L164.93 533.8 A8 8 0 0 1 161 540.73 Z" fill="#f4c20d"/>
<path d="M157 525.8 A8 8 0 0 1 163.93 529.8 L157 529.8Z" fill="#f4c20d" opacity="0"/>
<path d="M157 533.8 L157 525.8 A8 8 0 0 1 164.93 533.8 Z" fill="#f4c20d" opacity="0"/>
<path d="M150.07 537.8 A8 8 0 0 1 150.07 529.8 L157 533.8Z" fill="#0f9d58" opacity="0"/>
<circle cx="157" cy="533.8" r="3.6" fill="#fff"/>
<circle cx="157" cy="533.8" r="2.8" fill="#4285f4"/>
<!-- explorer -->
<path d="M184 528 H189.5 L191 529.5 H199.5 V540 H184Z" fill="#f2c649"/>
<rect x="184" y="531" width="15.5" height="9" fill="#f8d876"/>
<path d="M188.5 540 V536 H195 V540" fill="none" stroke="#2a8ad8" stroke-width="1.6"/>
<!-- skype -->
<circle cx="226.5" cy="534" r="7.5" fill="#1aa3e6"/>
<circle cx="221.5" cy="528.8" r="3" fill="#1aa3e6"/><circle cx="231.5" cy="539.2" r="3" fill="#1aa3e6"/>
<text x="226.5" y="538.3" font-size="12" font-weight="bold" fill="#fff" text-anchor="middle" font-family="Liberation Sans">S</text>
<rect x="212.5" y="546.4" width="28.2" height="1.6" fill="#8cc6f2"/>
<!-- word -->
<rect x="259" y="526.5" width="10.5" height="14.5" fill="#fff"/>
<path d="M260.5 529 H268 M260.5 531.5 H268 M260.5 534 H268 M260.5 536.5 H268 M260.5 539 H268" stroke="#2b5797" stroke-width="0.8"/>
<path d="M253 528 L262 526 V542 L253 540Z" fill="#2b579a"/>
<text x="257.3" y="537.5" font-size="7" font-weight="bold" fill="#fff" text-anchor="middle" font-family="Liberation Sans">W</text>
<rect x="247.2" y="546.4" width="28.6" height="1.6" fill="#8cc6f2"/>
<!-- smart notebook -->
<rect x="288" y="525.3" width="17" height="17" fill="#4aa6e0"/>
<rect x="290.5" y="527.8" width="12" height="12" fill="#fff"/>
<path d="M292.5 528.5 V539" stroke="#9fd0f0" stroke-width="1"/>
<path d="M294 538 L301 529" stroke="#1d6fb5" stroke-width="1.5"/>
<rect x="279.5" y="546.4" width="34.2" height="1.6" fill="#8cc6f2"/>
<!-- tray -->
<path d="M799.5 536 L803.8 531.5 L808 536" fill="none" stroke="#fff" stroke-width="1.1"/>
<g fill="none" stroke="#ddd" stroke-width="1">
<path d="M816.8 538.5 A9 9 0 0 1 825.8 529.5"/>
<path d="M819.5 538.5 A6.3 6.3 0 0 1 825.8 532.2"/>
<path d="M822.2 538.5 A3.6 3.6 0 0 1 825.8 534.9"/>
</g>
<circle cx="825" cy="537.8" r="0.9" fill="#fff"/>
<rect x="832.5" y="531.5" width="10" height="5.5" fill="none" stroke="#ddd" stroke-width="1"/>
<rect x="834" y="533" width="3" height="2.5" fill="#ddd"/>
<rect x="842.7" y="533" width="1.2" height="2.5" fill="#ddd"/>
<path d="M849 532 H851 L854 529.5 V538.5 L851 536 H849Z" fill="none" stroke="#ddd" stroke-width="1"/>
<path d="M856 531.5 L860 535.5 M860 531.5 L856 535.5" stroke="#ddd" stroke-width="1"/>
<!-- notification -->
<path d="M944.5 528.3 H956.5 V537.3 H952 L950 539.5 L948.8 537.3 H944.5Z" fill="none" stroke="#fff" stroke-width="1"/>
</svg>
<div class="a" style="left:868px;top:528px;font-size:8.8px;line-height:10px;color:#fff;white-space:nowrap">РУС</div>
<div class="a" style="left:902.5px;top:521.5px;font-size:8.8px;line-height:10px;color:#fff;white-space:nowrap">23:34</div>
<div class="a" style="left:892.5px;top:534.5px;font-size:8.8px;line-height:10px;color:#fff;white-space:nowrap;letter-spacing:-0.4px">22.02.2017</div>
</body></html>
